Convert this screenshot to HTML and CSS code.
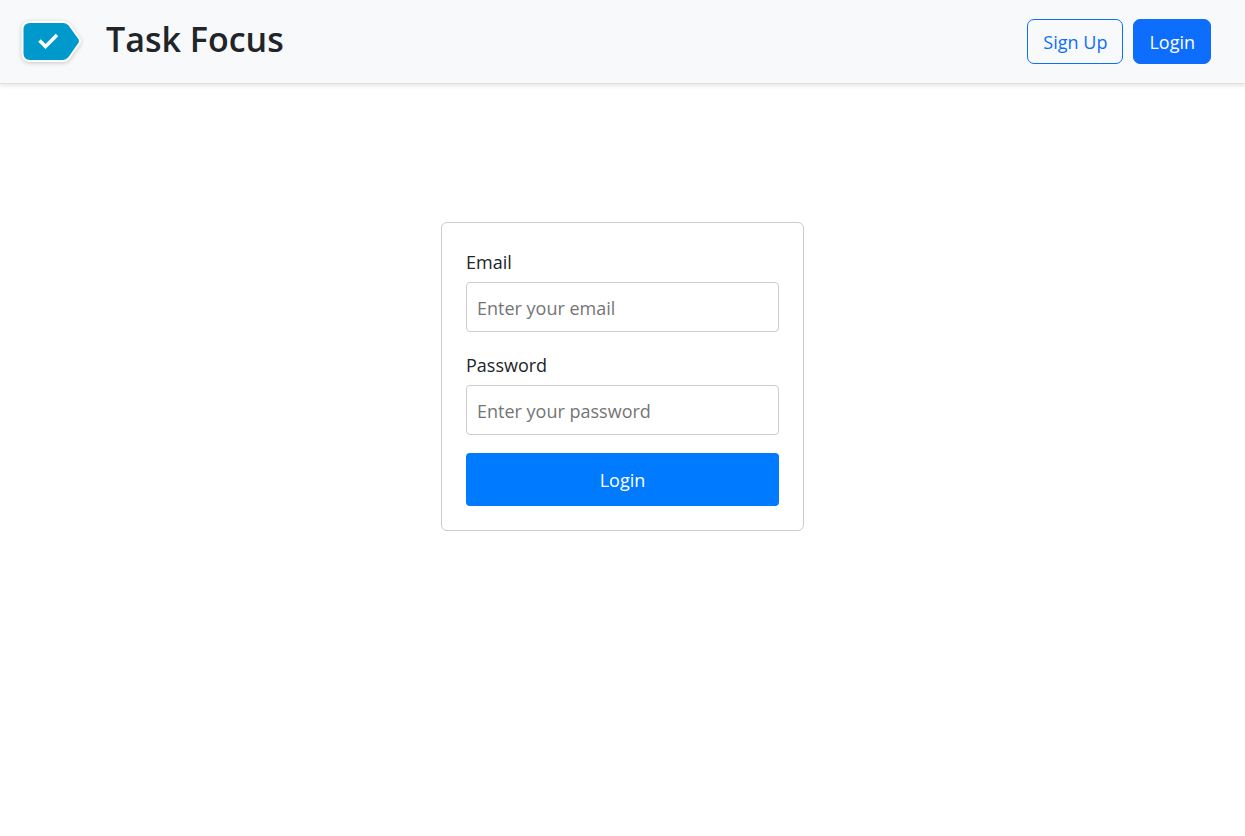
FILE: index.html
```html
<!DOCTYPE html>
<html lang="en">
<head>
  <meta charset="utf-8">
  <meta name="viewport" content="width=device-width, initial-scale=1">
  <title>Task Focus</title>
  <link rel="stylesheet" href="styles.css">
</head>
<body>
  <header class="header">
    <div class="brand">
      <svg class="logo" viewBox="0 0 64 46" aria-hidden="true">
        <path class="logo-tag" d="M11 3H44Q47.500 3 50 5.500L60.500 20Q61.500 22 60.500 24L50 39Q47.500 42 44 42H11Q3.500 42 3.500 34.500V10.500Q3.500 3 11 3Z"/>
        <path class="logo-check" d="M20.500 21.500L26.500 27.500L38 16"/>
      </svg>
      <h1 class="title">Task Focus</h1>
    </div>
    <nav class="actions">
      <button type="button" class="btn btn-outline">Sign Up</button>
      <button type="button" class="btn btn-primary">Login</button>
    </nav>
  </header>
  <main class="main">
    <form class="card">
      <div class="field">
        <label class="label" for="email">Email</label>
        <input class="input" id="email" type="email" placeholder="Enter your email">
      </div>
      <div class="field">
        <label class="label" for="password">Password</label>
        <input class="input" id="password" type="password" placeholder="Enter your password">
      </div>
      <button class="submit" type="submit">Login</button>
    </form>
  </main>
</body>
</html>
```

FILE: styles.css
```css
* {
  box-sizing: border-box;
}

body {
  margin: 0;
  background: #fff;
  color: #212529;
  font-family: "Segoe UI", "Open Sans", "Noto Sans", sans-serif;
  font-size: 18px;
  line-height: 27px;
}

button,
input {
  font: inherit;
}

.header {
  display: flex;
  align-items: center;
  justify-content: space-between;
  padding: 18px 34px 18px 19px;
  background: #f8f9fa;
  border-bottom: 1px solid #dee2e6;
  box-shadow: 0 2px 4px rgba(0, 0, 0, 0.1);
}

.brand {
  display: flex;
  align-items: center;
  gap: 23px;
}

.logo {
  width: 64px;
  height: 46px;
  overflow: visible;
  filter: drop-shadow(0 1px 2px rgba(0, 0, 0, 0.2));
}

.logo-tag {
  fill: #0099cc;
  stroke: #fff;
  stroke-width: 2;
}

.logo-check {
  fill: none;
  stroke: #fff;
  stroke-width: 3.5;
}

.title {
  margin: 0;
  padding-bottom: 4px;
  font-size: 34px;
  font-weight: 600;
  line-height: 43px;
}

.actions {
  display: flex;
  gap: 10px;
}

.btn {
  padding: 9px 15px 7px;
  border: 1px solid #0d6efd;
  border-radius: 7px;
  cursor: pointer;
}

.btn-outline {
  background: transparent;
  color: #0d6efd;
}

.btn-primary {
  background: #0d6efd;
  color: #fff;
}

.main {
  padding: 138px 24px 24px;
}

.card {
  display: flex;
  flex-direction: column;
  gap: 18px;
  max-width: 363px;
  margin: 0 auto;
  padding: 24px;
  border: 1px solid #ccc;
  border-radius: 6px;
}

.field {
  display: flex;
  flex-direction: column;
  gap: 5px;
}

.label {
  line-height: 30px;
}

.input {
  width: 100%;
  height: 50px;
  padding: 11px 10px 9px;
  border: 1px solid #ccc;
  border-radius: 4px;
  background: #fff;
  color: #212529;
}

.input::placeholder {
  color: #757575;
}

.submit {
  padding: 14px 12px 12px;
  border: 0;
  border-radius: 4px;
  background: #007bff;
  color: #fff;
  cursor: pointer;
}
```
